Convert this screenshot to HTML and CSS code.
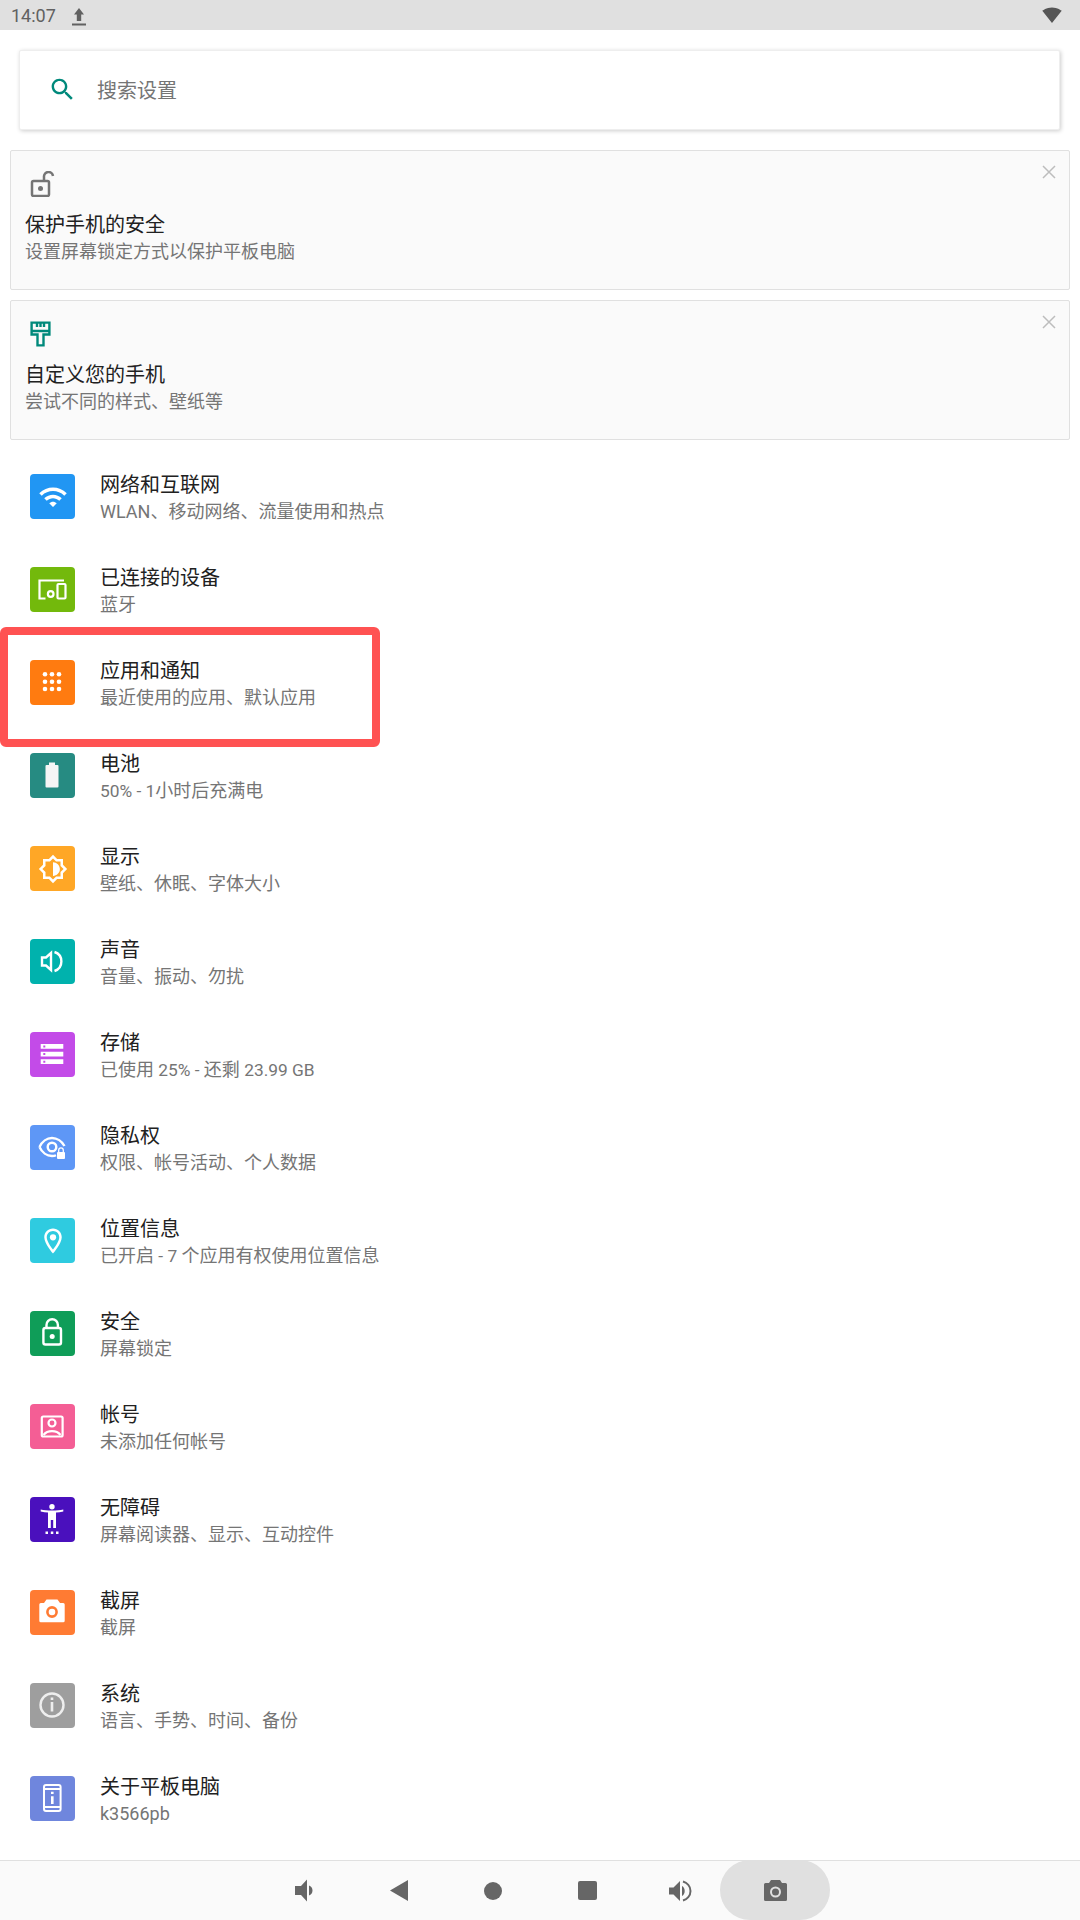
FILE: index.html
```html
<!DOCTYPE html>
<html lang="zh-CN">
<head>
    <meta charset="UTF-8">
    <title>设置</title>
    <link rel="stylesheet" href="styles.css">
</head>
<body>
    <div class="status-bar">
        <span class="status-time">14:07</span>
        <svg class="status-upload" viewBox="0 0 14 18"><path d="M7 0l5 6.500H9.200V13H4.800V6.500H2zM0 15.600h14V17.400H0z" fill="#616161"/></svg>
        <svg class="status-wifi" viewBox="0 0 24 24"><path d="M12.010 21.490L23.640 7c-.450-.340-4.930-4-11.640-4C5.280 3 .810 6.660.360 7l11.630 14.490.010.010.010-.010z" fill="#555"/></svg>
    </div>

    <main class="content">
        <div class="search-card">
            <svg class="search-icon" viewBox="0 0 24 24"><path d="M15.500 14h-.790l-.280-.270C15.410 12.590 16 11.110 16 9.500 16 5.910 13.090 3 9.500 3S3 5.910 3 9.500 5.910 16 9.500 16c1.610 0 3.090-.590 4.230-1.570l.270.280v.790l5 4.990L20.490 19l-4.990-5zm-6 0C7.010 14 5 11.990 5 9.500S7.010 5 9.500 5 14 7.010 14 9.500 11.990 14 9.500 14z" fill="#00897b"/></svg>
            <span class="search-text">搜索设置</span>
        </div>

        <div class="suggestion">
            <svg class="close-icon" viewBox="0 0 14 14"><path d="M1 1l12 12M13 1L1 13" stroke="#bdbdbd" stroke-width="1.500" fill="none"/></svg>
            <svg class="suggestion-icon" viewBox="0 0 25 26"><g fill="none" stroke="#757575" stroke-width="2.500"><rect x="2" y="10" width="17" height="15" rx="1.500"/><path d="M14 10V6a4.500 4.500 0 0 1 9-1"/></g><circle cx="10.500" cy="17.500" r="2.500" fill="#757575"/></svg>
            <div class="suggestion-title">保护手机的安全</div>
            <div class="suggestion-sub">设置屏幕锁定方式以保护平板电脑</div>
        </div>

        <div class="suggestion">
            <svg class="close-icon" viewBox="0 0 14 14"><path d="M1 1l12 12M13 1L1 13" stroke="#bdbdbd" stroke-width="1.500" fill="none"/></svg>
            <svg class="suggestion-icon" viewBox="0 0 25 26"><g fill="none" stroke="#00897b" stroke-width="2.400"><path d="M1.600 1.600H19.400V13.500H13.500V24.400H7.500V13.500H1.600Z"/><path d="M1.600 10H19.400M7 1.600V6M10.500 1.600V6M14 1.600V6"/></g></svg>
            <div class="suggestion-title">自定义您的手机</div>
            <div class="suggestion-sub">尝试不同的样式、壁纸等</div>
        </div>

        <ul class="settings-list">
            <li class="row">
                <div class="tile tile-network"><svg viewBox="0 0 24 24"><path d="M1 9l2 2c4.970-4.970 13.030-4.970 18 0l2-2C16.930 2.930 7.080 2.930 1 9zm8 8l3 3 3-3c-1.650-1.660-4.340-1.660-6 0zm-4-4l2 2c2.760-2.760 7.240-2.760 10 0l2-2C15.140 9.140 8.870 9.140 5 13z" fill="#fff"/></svg></div>
                <div class="row-text"><div class="row-title">网络和互联网</div><div class="row-sub">WLAN、移动网络、流量使用和热点</div></div>
            </li>
            <li class="row">
                <div class="tile tile-devices"><svg viewBox="0 0 45 45"><g fill="none" stroke="#fff" stroke-width="2.200"><path d="M15.500 31.500H9.500V13.500H34"/><rect x="27.500" y="17" width="8" height="14.500" rx="1"/><circle cx="20.700" cy="27" r="2.800"/></g></svg></div>
                <div class="row-text"><div class="row-title">已连接的设备</div><div class="row-sub">蓝牙</div></div>
            </li>
            <li class="row">
                <div class="tile tile-apps"><svg viewBox="0 0 45 45"><g fill="#fff"><circle cx="15" cy="14.300" r="2.300"/><circle cx="22" cy="14.300" r="2.300"/><circle cx="29" cy="14.300" r="2.300"/><circle cx="15" cy="21.700" r="2.300"/><circle cx="22" cy="21.700" r="2.300"/><circle cx="29" cy="21.700" r="2.300"/><circle cx="15" cy="29" r="2.300"/><circle cx="22" cy="29" r="2.300"/><circle cx="29" cy="29" r="2.300"/></g></svg></div>
                <div class="row-text"><div class="row-title">应用和通知</div><div class="row-sub">最近使用的应用、默认应用</div></div>
            </li>
            <li class="row">
                <div class="tile tile-battery"><svg viewBox="0 0 45 45"><path d="M19 9.500h6v2.500h2.500a1 1 0 0 1 1 1v20.500a1 1 0 0 1-1 1h-11a1 1 0 0 1-1-1V13a1 1 0 0 1 1-1H19z" fill="#f5f5f5"/></svg></div>
                <div class="row-text"><div class="row-title">电池</div><div class="row-sub"><span class="latin">50% - 1</span>小时后充满电</div></div>
            </li>
            <li class="row">
                <div class="tile tile-display"><svg viewBox="0 0 24 24"><path d="M20 15.310L23.310 12 20 8.690V4h-4.690L12 .690 8.690 4H4v4.690L.690 12 4 15.310V20h4.690L12 23.310 15.310 20H20v-4.690zm-2-.830V18h-3.520L12 20.480 9.520 18H6v-3.520L3.520 12 6 9.520V6h3.520L12 3.520 14.480 6H18v3.520L20.480 12 18 14.480zM12 6.500v11c3.030 0 5.500-2.470 5.500-5.500S15.030 6.500 12 6.500z" fill="#fff"/></svg></div>
                <div class="row-text"><div class="row-title">显示</div><div class="row-sub">壁纸、休眠、字体大小</div></div>
            </li>
            <li class="row">
                <div class="tile tile-sound"><svg viewBox="0 0 45 45"><g fill="none" stroke="#fff" stroke-width="2.400"><path d="M12 18.500h4l5-4.500v17l-5-4.500h-4z"/><path d="M24.500 13a10 10 0 0 1 0 19"/></g></svg></div>
                <div class="row-text"><div class="row-title">声音</div><div class="row-sub">音量、振动、勿扰</div></div>
            </li>
            <li class="row">
                <div class="tile tile-storage"><svg viewBox="0 0 45 45"><path d="M10.700 12h22.600v4.700H10.700zM10.700 19.700h22.600v4.700H10.700zM10.700 27.300h22.600v4.700H10.700z" fill="#fff"/><path d="M13.300 13.500h2v2h-2zM13.300 21h2v2h-2zM13.300 28.700h2v2h-2z" fill="#c34be8"/></svg></div>
                <div class="row-text"><div class="row-title">存储</div><div class="row-sub">已使用<span class="latin"> 25% - </span>还剩<span class="latin"> 23.99 GB</span></div></div>
            </li>
            <li class="row">
                <div class="tile tile-privacy"><svg viewBox="0 0 45 45"><g fill="none" stroke="#fff" stroke-width="2.400"><path d="M9.500 22C12 16.500 17 13 22 13s10 3.500 12.500 8M9.500 22c2.500 5.500 7.500 9 12.500 9 1.500 0 3-.3 4-.8"/><circle cx="22" cy="22" r="4.300"/></g><path d="M28.700 27v-1.800a2.300 2.300 0 0 1 4.600 0V27" fill="none" stroke="#fff" stroke-width="1.300"/><rect x="27" y="27" width="8" height="7" rx="1" fill="#fff"/></svg></div>
                <div class="row-text"><div class="row-title">隐私权</div><div class="row-sub">权限、帐号活动、个人数据</div></div>
            </li>
            <li class="row">
                <div class="tile tile-location"><svg viewBox="0 0 24 24"><path d="M12 2C8.130 2 5 5.130 5 9c0 5.250 7 13 7 13s7-7.750 7-13c0-3.870-3.130-7-7-7zM7 9c0-2.760 2.240-5 5-5s5 2.240 5 5c0 2.880-2.880 7.190-5 9.880C9.920 16.210 7 11.850 7 9z" fill="#fff"/><circle cx="12" cy="9" r="2.500" fill="#fff"/></svg></div>
                <div class="row-text"><div class="row-title">位置信息</div><div class="row-sub">已开启<span class="latin"> - 7 </span>个应用有权使用位置信息</div></div>
            </li>
            <li class="row">
                <div class="tile tile-security"><svg viewBox="0 0 45 45"><g fill="none" stroke="#fff" stroke-width="2.400"><rect x="13.400" y="17" width="17.600" height="16.500" rx="2"/><path d="M16.500 17v-3a5.700 5.700 0 0 1 11.400 0v3"/></g><circle cx="22.200" cy="25.500" r="2.500" fill="#fff"/></svg></div>
                <div class="row-text"><div class="row-title">安全</div><div class="row-sub">屏幕锁定</div></div>
            </li>
            <li class="row">
                <div class="tile tile-account"><svg viewBox="0 0 45 45"><g fill="none" stroke="#fff" stroke-width="2.200"><rect x="11.800" y="12.500" width="20.800" height="20" rx="1.500"/><circle cx="22" cy="19" r="3.500"/><path d="M13.500 31c2-2.500 5-3.800 8.500-3.800s6.500 1.300 8.500 3.800"/></g></svg></div>
                <div class="row-text"><div class="row-title">帐号</div><div class="row-sub">未添加任何帐号</div></div>
            </li>
            <li class="row">
                <div class="tile tile-access"><svg viewBox="0 0 45 45"><g fill="#fff"><circle cx="22" cy="9.700" r="2.700"/><path d="M10.700 12.500c3 .6 7 1 11.300 1s8.300-.4 11.300-1v2c-2.500.6-5 .9-7.300 1V31h-2.800V23h-2.400v8H18V15.500c-2.300-.1-4.800-.4-7.300-1z"/><rect x="15.500" y="34.500" width="2.500" height="2.500"/><rect x="20.800" y="34.500" width="2.500" height="2.500"/><rect x="26" y="34.500" width="2.500" height="2.500"/></g></svg></div>
                <div class="row-text"><div class="row-title">无障碍</div><div class="row-sub">屏幕阅读器、显示、互动控件</div></div>
            </li>
            <li class="row">
                <div class="tile tile-screenshot"><svg viewBox="0 0 45 45"><path d="M16.500 9.500h11L30 13h3.200a1.500 1.500 0 0 1 1.500 1.500v16.300a1.500 1.500 0 0 1-1.500 1.500H10.800a1.500 1.500 0 0 1-1.500-1.500V14.500a1.500 1.500 0 0 1 1.500-1.500H14z" fill="#fff"/><circle cx="22" cy="22" r="4.600" fill="none" stroke="#ff7b33" stroke-width="2.600"/></svg></div>
                <div class="row-text"><div class="row-title">截屏</div><div class="row-sub">截屏</div></div>
            </li>
            <li class="row">
                <div class="tile tile-system"><svg viewBox="0 0 45 45"><circle cx="22" cy="22" r="11.500" fill="none" stroke="#eee" stroke-width="2.400"/><path d="M20.700 14.400h2.600V17h-2.600zM20.700 19h2.600v9.500h-2.600z" fill="#eee"/></svg></div>
                <div class="row-text"><div class="row-title">系统</div><div class="row-sub">语言、手势、时间、备份</div></div>
            </li>
            <li class="row">
                <div class="tile tile-about"><svg viewBox="0 0 45 45"><g fill="none" stroke="#fff" stroke-width="2"><rect x="14" y="9" width="16.600" height="26" rx="2"/><path d="M14 13h16.600M14 31h16.600"/></g><path d="M21 15.700h2.600v2.200H21zM21 20.300h2.600V28H21z" fill="#fff"/></svg></div>
                <div class="row-text"><div class="row-title">关于平板电脑</div><div class="row-sub">k3566pb</div></div>
            </li>
        </ul>

        <!-- red annotation drawn over the apps row -->
        <div class="highlight"></div>
    </main>

    <nav class="nav-bar">
        <div class="nav-btn"><svg class="nav-low" viewBox="0 0 20 23"><path d="M0 7h6l6-6.500v22L6 16H0zM14 6.500c2 .5 3.500 2.500 3.500 5s-1.500 4.500-3.500 5z" fill="#666"/></svg></div>
        <div class="nav-btn"><svg class="nav-back" viewBox="0 0 18 21"><path d="M18 0v21L0 10.500z" fill="#666"/></svg></div>
        <div class="nav-btn"><div class="nav-home"></div></div>
        <div class="nav-btn"><div class="nav-recent"></div></div>
        <div class="nav-btn"><svg class="nav-high" viewBox="0 0 24 22"><path d="M0 7.500h4.500L11 1v20l-6.500-6.500H0zM13 6c1.700.8 2.700 2.700 2.700 5S14.700 15.200 13 16z" fill="#666"/><path d="M14 1.500c4 1.200 7.500 4.800 7.500 9.500s-3.500 8.300-7.500 9.500" fill="none" stroke="#666" stroke-width="2"/></svg></div>
        <div class="nav-btn nav-camera"><svg class="nav-cam" viewBox="0 0 23 21"><path d="M7 0h9l2 3h3.500A1.500 1.500 0 0 1 23 4.500V19.500A1.500 1.500 0 0 1 21.500 21H1.500A1.500 1.500 0 0 1 0 19.500V4.500A1.500 1.500 0 0 1 1.500 3H5z" fill="#666"/><circle cx="11.500" cy="12" r="4.500" fill="none" stroke="#e0e0e0" stroke-width="2"/></svg></div>
    </nav>
</body>
</html>
```

FILE: styles.css
```css
* {
    margin: 0;
    padding: 0;
    box-sizing: border-box;
}

body {
    width: 1080px;
    height: 1920px;
    display: flex;
    flex-direction: column;
    font-family: Roboto, "Noto Sans CJK SC", sans-serif;
    background: #fff;
    overflow: hidden;
}

/* Status bar */
.status-bar {
    height: 30px;
    background: #e0e0e0;
    display: flex;
    align-items: center;
    padding: 0 18px 0 11px;
    flex-shrink: 0;
}

.status-time {
    font-size: 18px;
    color: #616161;
}

.status-upload {
    width: 14px;
    height: 18px;
    margin-left: 16px;
    margin-top: 3px;
}

.status-wifi {
    width: 20px;
    height: 20px;
    margin-left: auto;
    margin-top: -1px;
}

.content {
    flex: 1;
    position: relative;
}

/* Search */
.search-card {
    height: 80px;
    margin: 20px 20px 20px 19px;
    background: #fff;
    border: 1px solid #eee;
    border-radius: 2px;
    box-shadow: 1px 1px 4px rgba(0, 0, 0, 0.2);
    display: flex;
    align-items: center;
    padding: 0 0 2px 28px;
}

.search-icon {
    width: 29px;
    height: 29px;
}

.search-text {
    font-size: 20px;
    color: #757575;
    margin-left: 20px;
}

/* Suggestion cards */
.suggestion {
    position: relative;
    height: 140px;
    margin: 0 10px 10px;
    padding: 20px 14px 0;
    background: #fafafa;
    border: 1px solid #e0e0e0;
    border-radius: 2px;
}

.suggestion-icon {
    display: block;
    width: 25px;
    height: 26px;
    margin-left: 5px;
}

.suggestion-title {
    font-size: 20px;
    line-height: 27px;
    color: #212121;
    margin-top: 15px;
}

.suggestion-sub {
    font-size: 18px;
    line-height: 27px;
    color: #757575;
    margin-top: -1px;
}

.close-icon {
    position: absolute;
    top: 14px;
    right: 13px;
    width: 14px;
    height: 14px;
}

/* Settings rows */
.settings-list {
    list-style: none;
    margin-top: 10px;
}

.row {
    height: 93px;
    display: flex;
    align-items: center;
    padding-left: 30px;
}

.tile {
    width: 45px;
    height: 45px;
    border-radius: 4px;
    display: flex;
    align-items: center;
    justify-content: center;
    flex-shrink: 0;
}

.tile svg {
    width: 45px;
    height: 45px;
}

.tile-network svg,
.tile-display svg,
.tile-location svg {
    width: 30px;
    height: 30px;
}

.tile-network { background: #2196f3; }
.tile-devices { background: #73b90c; }
.tile-apps { background: #ff7b10; }
.tile-battery { background: #268b82; }
.tile-display { background: #ffa726; }
.tile-sound { background: #00b2ad; }
.tile-storage { background: #c34be8; }
.tile-privacy { background: #5e97f6; }
.tile-location { background: #2fcbe0; }
.tile-security { background: #0f9d58; }
.tile-account { background: #f45e95; }
.tile-access { background: #4a10bd; }
.tile-screenshot { background: #ff7b33; }
.tile-system { background: #9e9e9e; }
.tile-about { background: #6f86dd; }

.row-text {
    margin-left: 25px;
    padding-top: 3px;
}

.row-title {
    font-size: 20px;
    line-height: 27px;
    color: #212121;
}

.row-sub {
    font-size: 18px;
    line-height: 25px;
    color: #757575;
}

.latin {
    font-size: 17.33px;
}

/* Red annotation box */
.highlight {
    position: absolute;
    left: 0;
    top: 597px;
    width: 380px;
    height: 120px;
    border: 8px solid #ff5252;
    border-radius: 6px;
}

/* Nav bar */
.nav-bar {
    height: 60px;
    flex-shrink: 0;
    background: #fafafa;
    border-top: 1px solid #e0e0e0;
    display: flex;
    padding-left: 258px;
}

.nav-btn {
    width: 94px;
    display: flex;
    align-items: center;
    justify-content: center;
}

.nav-camera {
    width: 110px;
    margin: -1px 0 0 -8px;
    background: #e0e0e0;
    border-radius: 30px;
}

.nav-low {
    width: 20px;
    height: 23px;
}

.nav-back {
    width: 18px;
    height: 21px;
}

.nav-home {
    width: 18px;
    height: 18px;
    border-radius: 50%;
    background: #666;
}

.nav-recent {
    width: 19px;
    height: 19px;
    border-radius: 2px;
    background: #666;
}

.nav-high {
    width: 24px;
    height: 22px;
}

.nav-cam {
    width: 23px;
    height: 21px;
}
```
